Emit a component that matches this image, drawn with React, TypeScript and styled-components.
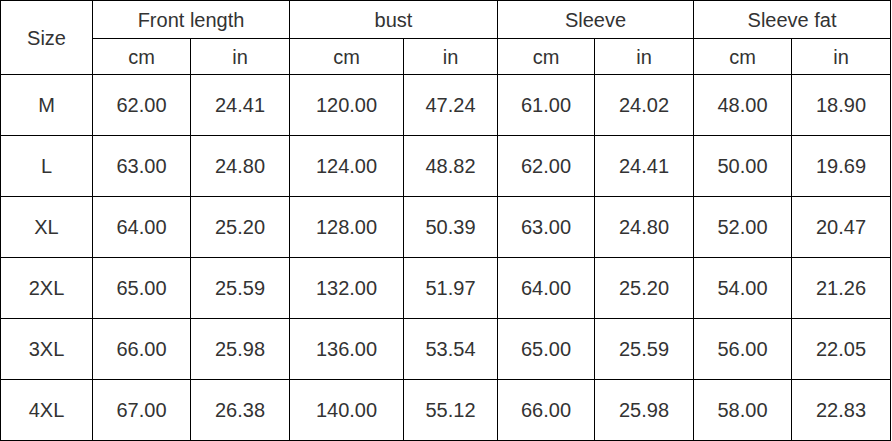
import React from 'react'
import styled, { createGlobalStyle } from 'styled-components'

const GlobalStyle = createGlobalStyle`
	html, body {
		margin: 0;
		padding: 0;
		background: #fff;
	}
`

const Table = styled.table`
	border-collapse: collapse;
	table-layout: fixed;
	width: 891px;
	font-family: "Liberation Sans", Arial, sans-serif;
	font-size: 20px;
	color: #333;
`

const Cell = styled.td`
	border: 1px solid #000;
	padding: 0;
	text-align: center;
	vertical-align: middle;
	line-height: 1;
`

interface RowProps {
	h: number;
}

const Row = styled.tr<RowProps>`
	height: ${({ h }) => h}px;
`

const widths = [92, 98, 99, 114, 94, 97, 99, 98, 99]

const groups = ['Front length', 'bust', 'Sleeve', 'Sleeve fat']

const rows: [string, string[]][] = [
	['M', ['62.00', '24.41', '120.00', '47.24', '61.00', '24.02', '48.00', '18.90']],
	['L', ['63.00', '24.80', '124.00', '48.82', '62.00', '24.41', '50.00', '19.69']],
	['XL', ['64.00', '25.20', '128.00', '50.39', '63.00', '24.80', '52.00', '20.47']],
	['2XL', ['65.00', '25.59', '132.00', '51.97', '64.00', '25.20', '54.00', '21.26']],
	['3XL', ['66.00', '25.98', '136.00', '53.54', '65.00', '25.59', '56.00', '22.05']],
	['4XL', ['67.00', '26.38', '140.00', '55.12', '66.00', '25.98', '58.00', '22.83']],
]

export default function App() {
	return (
		<>
			<GlobalStyle />
			<Table>
				<colgroup>
					{widths.map((w, i) => <col key={i} style={{ width: w }} />)}
				</colgroup>
				<tbody>
					<Row h={38}>
						<Cell rowSpan={2}>Size</Cell>
						{groups.map(g => <Cell key={g} colSpan={2}>{g}</Cell>)}
					</Row>
					<Row h={36}>
						{groups.map(g => (
							<React.Fragment key={g}>
								<Cell>cm</Cell>
								<Cell>in</Cell>
							</React.Fragment>
						))}
					</Row>
					{rows.map(([size, vals]) => (
						<Row key={size} h={61}>
							<Cell>{size}</Cell>
							{vals.map((v, i) => <Cell key={i}>{v}</Cell>)}
						</Row>
					))}
				</tbody>
			</Table>
		</>
	)
}
